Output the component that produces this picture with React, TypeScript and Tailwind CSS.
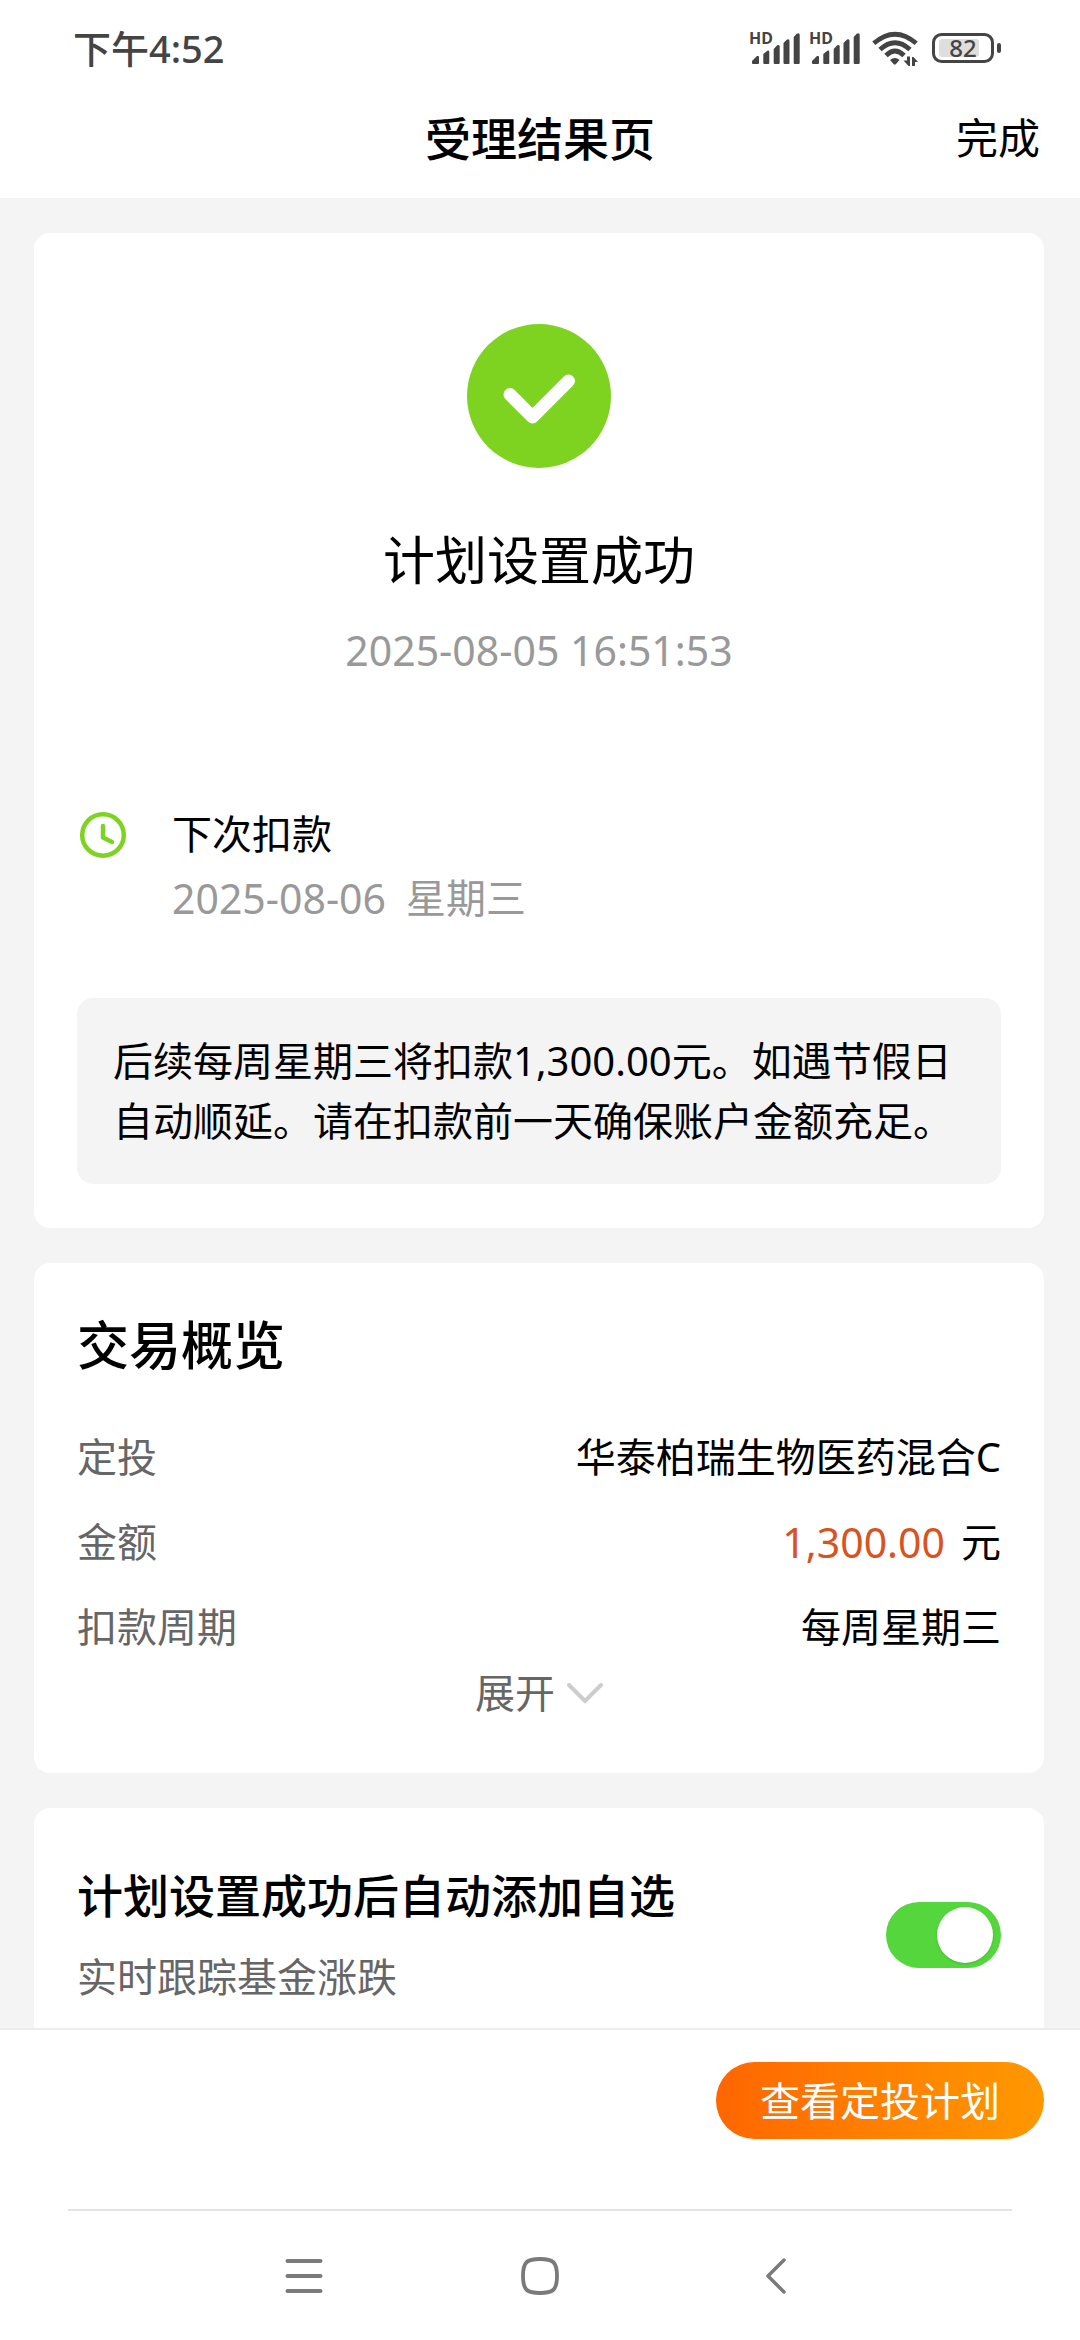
import { useState } from 'react'

const overview = [
  { label: '定投', value: '华泰柏瑞生物医药混合C' },
  { label: '金额', value: '1,300.00', unit: '元' },
  { label: '扣款周期', value: '每周星期三' },
]

function SignalIcon() {
  return (
    <svg viewBox="0 -7 52 48" className="h-12 w-[52px]" fill="#444444">
      <text x="-1" y="13" fontSize="16" fontWeight="700">
        HD
      </text>
      <path d="M2 32v-2l5-5h1.500l.5.5V32q0 1-1 1H3q-1 0-1-1z" />
      <path d="M13.300 32v-9l4-3.300q2-.5 2 1.300v11q0 1-1 1h-4q-1 0-1-1z" />
      <path d="M23.700 32V18l3.500-3.700q2.500-.8 2.500 1.300V32q0 1-1 1h-4q-1 0-1-1z" />
      <path d="M33.500 32V12l3.500-3.500q2.500-1 2.500 1.300V32q0 1-1 1h-4q-1 0-1-1z" />
      <path d="M43.700 32V6l3-3.300q3-1.200 3 1.300v28q0 1-1 1h-4q-1 0-1-1z" />
    </svg>
  )
}

function WifiIcon() {
  return (
    <svg viewBox="0 -1 46 36" className="h-9 w-[46px]" fill="none" stroke="#444444">
      <path d="M1.800 12.300Q23-6 44.200 12.300" strokeWidth="4.800" />
      <path d="M8 18.500Q23 5 38 18.500" strokeWidth="4.800" />
      <path d="M14 24.500Q23 15.500 32 24.500" strokeWidth="4.800" />
      <path d="M18 29q5-4 9.500 0l-3.500 4q-1.200 1-2.500 0z" fill="#444444" stroke="none" />
      <path d="M35 25.500h3v9.500h-1.500l-5-5.500H35zM43 35h-3v-9h1.500l4.500 5H43z" fill="#444444" stroke="none" />
    </svg>
  )
}

function BatteryIcon() {
  return (
    <svg viewBox="0 -1 70 36" className="h-9 w-[70px]">
      <rect x="7" y="8" width="40" height="18" rx="3" fill="#dedede" />
      <rect x="1.500" y="3.500" width="59" height="27" rx="8" fill="none" stroke="#444444" strokeWidth="3" />
      <rect x="65" y="12" width="4" height="10" rx="2" fill="#444444" />
      <text x="31" y="25.500" fontSize="24" fontWeight="500" textAnchor="middle" fill="#444444">
        82
      </text>
    </svg>
  )
}

export default function App() {
  const [watch, setWatch] = useState(true)

  return (
    <div className="flex min-h-screen flex-col bg-[#f4f4f4] font-['Noto_Sans','Noto_Sans_CJK_SC',sans-serif] text-[40px] leading-[60px] text-black">
      <header className="bg-white">
        {/* Status bar */}
        <div className="flex h-24 items-center justify-between pr-[78px] pl-[73px] text-[38px] font-medium text-[#444444]">
          <span>下午4:52</span>
          <div className="flex items-center">
            <SignalIcon />
            <div className="ml-2">
              <SignalIcon />
            </div>
            <div className="ml-[10px]">
              <WifiIcon />
            </div>
            <div className="ml-[14px]">
              <BatteryIcon />
            </div>
          </div>
        </div>

        {/* Title bar */}
        <div className="grid grid-cols-3 items-center px-10 pb-[18px] leading-[84px]">
          <h1 className="col-start-2 text-center text-[46px] font-medium">受理结果页</h1>
          <button type="button" className="justify-self-end text-[42px]">
            完成
          </button>
        </div>
      </header>

      <main className="flex flex-1 flex-col gap-[35px] pt-[35px] pr-9 pl-[34px]">
        <section className="rounded-2xl bg-white px-[43px] pt-[91px] pb-11">
          <div className="flex flex-col items-center">
            <svg viewBox="0 0 144 144" className="size-36">
              <circle cx="72" cy="72" r="72" fill="#7ed321" />
              <path
                d="M43 70.500 65.500 93 101.500 57"
                fill="none"
                stroke="#ffffff"
                strokeWidth="13"
                strokeLinecap="round"
                strokeLinejoin="round"
              />
            </svg>
            <h2 className="mt-14 text-[52px] leading-[72px]">计划设置成功</h2>
            <time className="mt-6 text-[41px] text-[#999999]">2025-08-05 16:51:53</time>
          </div>

          <div className="mt-[122px] flex gap-[43px] leading-[64px]">
            <svg
              viewBox="0 0 52 64"
              className="h-16 w-[52px]"
              fill="none"
              stroke="#7ed321"
              strokeWidth="4.500"
              strokeLinecap="round"
              strokeLinejoin="round"
            >
              <circle cx="26" cy="33" r="20.800" />
              <path d="M26 24v11.500l9 4.500" />
            </svg>
            <div>
              <h3>下次扣款</h3>
              <p className="flex gap-5 text-[#999999]">
                <time className="text-[41px]">2025-08-06</time>
                <span>星期三</span>
              </p>
            </div>
          </div>

          <p className="mt-[68px] rounded-2xl bg-[#f4f4f4] px-9 py-[33px]">
            后续每周星期三将扣款1,300.00元。如遇节假日自动顺延。请在扣款前一天确保账户金额充足。
          </p>
        </section>

        <section className="rounded-2xl bg-white px-[43px] pt-[46px] pb-[50px]">
          <h2 className="text-[52px] leading-[72px] font-medium">交易概览</h2>
          <dl className="mt-[46px] flex flex-col gap-[25px]">
            {overview.map((row) => (
              <div key={row.label} className="flex justify-between">
                <dt className="text-[#666666]">{row.label}</dt>
                <dd className="flex gap-4">
                  <span className={row.unit ? 'text-[41px] text-[#d9531e]' : ''}>{row.value}</span>
                  {row.unit && <span>{row.unit}</span>}
                </dd>
              </div>
            ))}
          </dl>
          <button type="button" className="mx-auto mt-[6px] flex items-center gap-3 text-[#666666]">
            展开
            <svg viewBox="0 0 36 24" className="h-6 w-9" fill="none" stroke="#cccccc" strokeWidth="4" strokeLinecap="round">
              <path d="M2 4 18 20 34 4" />
            </svg>
          </button>
        </section>

        <section className="flex-1 rounded-t-2xl bg-white px-[43px] pt-[55px]">
          <div className="flex items-center justify-between">
            <div>
              <label htmlFor="watch" className="block text-[46px] leading-[64px] font-medium">
                计划设置成功后自动添加自选
              </label>
              <p className="mt-5 text-[#666666]">实时跟踪基金涨跌</p>
            </div>
            <input
              id="watch"
              type="checkbox"
              role="switch"
              checked={watch}
              onChange={(e) => setWatch(e.target.checked)}
              className="flex h-[66px] w-[115px] shrink-0 appearance-none items-center rounded-full bg-gray-300 px-2 before:size-14 before:rounded-full before:bg-white before:shadow checked:justify-end checked:bg-[#54d63c]"
            />
          </div>
        </section>
      </main>

      <footer className="bg-white">
        <div className="flex justify-end border-t-2 border-[#ececec] px-9 pt-8 pb-[70px]">
          <button
            type="button"
            className="h-[77px] rounded-full bg-linear-to-r from-[#ff6600] to-[#ff9800] px-11 text-white"
          >
            查看定投计划
          </button>
        </div>

        {/* System navigation */}
        <div className="mx-[68px] border-t-2 border-[#e2e2e2]" />
        <nav className="grid h-[129px] grid-cols-3 place-items-center px-[186px]">
          <button type="button" aria-label="最近任务">
            <svg viewBox="0 0 40 40" className="size-10" stroke="#7a7a7a" strokeWidth="4" strokeLinecap="round">
              <path d="M3.500 5h33M3.500 20h33M3.500 35h33" />
            </svg>
          </button>
          <button type="button" aria-label="主屏幕">
            <svg viewBox="0 0 40 40" className="size-10" fill="none" stroke="#7a7a7a" strokeWidth="3.800">
              <path d="M20 3C33 3 37 6 37 20S33 37 20 37 3 34 3 20 7 3 20 3z" />
            </svg>
          </button>
          <button type="button" aria-label="返回">
            <svg
              viewBox="0 0 40 40"
              className="size-10"
              fill="none"
              stroke="#7a7a7a"
              strokeWidth="3.500"
              strokeLinecap="round"
              strokeLinejoin="round"
            >
              <path d="M28 4 12 20 28 36" />
            </svg>
          </button>
        </nav>
      </footer>
    </div>
  )
}
